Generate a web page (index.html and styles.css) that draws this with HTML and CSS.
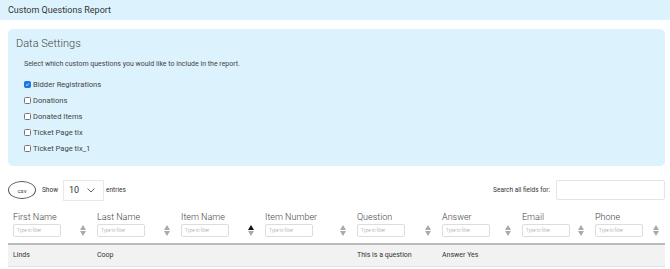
FILE: index.html
```html
<!DOCTYPE html>
<html>
<head>
<meta charset="utf-8">
<link rel="stylesheet" href="styles.css">
</head>
<body>
<div class="topbar">Custom Questions Report</div>
<div class="panel">
  <div class="panel-title">Data Settings</div>
  <div class="panel-desc">Select which custom questions you would like to include in the report.</div>
  <label class="opt"><span class="cb checked"><svg viewBox="0 0 8 8" width="7" height="7"><path d="M1.6 4.2 L3.3 5.8 L6.4 2.2" fill="none" stroke="#fff" stroke-width="1.3"/></svg></span>Bidder Registrations</label>
  <label class="opt"><span class="cb"></span>Donations</label>
  <label class="opt"><span class="cb"></span>Donated Items</label>
  <label class="opt"><span class="cb"></span>Ticket Page tix</label>
  <label class="opt"><span class="cb"></span>Ticket Page tix_1</label>
</div>
<div class="controls">
  <div class="left">
    <span class="csv">csv</span>
    <span class="lbl">Show</span>
    <span class="select">10 <svg width="8" height="5" viewBox="0 0 8 5"><path d="M0.5 0.5 L4 4 L7.5 0.5" fill="none" stroke="#555" stroke-width="0.9"/></svg></span>
    <span class="lbl">entries</span>
  </div>
  <div class="right">
    <span class="lbl">Search all fields for:</span>
    <span class="search"></span>
  </div>
</div>
<table class="grid">
  <colgroup>
    <col style="width:84px"><col style="width:84px"><col style="width:84px"><col style="width:92px">
    <col style="width:85px"><col style="width:80px"><col style="width:73px"><col style="width:75px">
  </colgroup>
  <thead>
    <tr>
      <th><div class="hname">First Name</div><div class="hrow"><span class="filter">Type to filter</span><span class="sort"><i class="up"></i><i class="dn"></i></span></div></th>
      <th><div class="hname">Last Name</div><div class="hrow"><span class="filter">Type to filter</span><span class="sort"><i class="up"></i><i class="dn"></i></span></div></th>
      <th><div class="hname">Item Name</div><div class="hrow"><span class="filter">Type to filter</span><span class="sort"><i class="up active"></i><i class="dn"></i></span></div></th>
      <th><div class="hname">Item Number</div><div class="hrow"><span class="filter">Type to filter</span><span class="sort"><i class="up"></i><i class="dn"></i></span></div></th>
      <th><div class="hname">Question</div><div class="hrow"><span class="filter">Type to filter</span><span class="sort"><i class="up"></i><i class="dn"></i></span></div></th>
      <th><div class="hname">Answer</div><div class="hrow"><span class="filter">Type to filter</span><span class="sort"><i class="up"></i><i class="dn"></i></span></div></th>
      <th><div class="hname">Email</div><div class="hrow"><span class="filter">Type to filter</span><span class="sort"><i class="up"></i><i class="dn"></i></span></div></th>
      <th><div class="hname">Phone</div><div class="hrow"><span class="filter">Type to filter</span><span class="sort"><i class="up"></i><i class="dn"></i></span></div></th>
    </tr>
  </thead>
  <tbody>
    <tr><td>Linds</td><td>Coop</td><td></td><td></td><td>This is a question</td><td>Answer Yes</td><td></td><td></td></tr>
  </tbody>
</table>
</body>
</html>
```
FILE: styles.css
```css
* { box-sizing: border-box; }
body {
  margin: 0;
  font-family: Roboto, "Liberation Sans", sans-serif;
  color: #333;
  background: #fff;
}
.topbar {
  height: 20px;
  background: #dcf3fe;
  font-size: 9px;
  line-height: 20px;
  padding-left: 8px;
  color: #333;
}
.panel {
  margin: 9px 5px 0 8px;
  background: #dcf3fe;
  border-radius: 5px;
  padding: 8px 8px 9px 8px;
  height: 137px;
}
.panel-title {
  font-size: 11px;
  font-weight: 300;
  color: #444;
  line-height: 14px;
  margin-bottom: 7px;
}
.panel-desc {
  font-size: 7px;
  color: #444;
  margin-left: 8px;
  line-height: 12px;
  margin-bottom: 6px;
}
.opt {
  display: flex;
  align-items: center;
  margin-left: 8px;
  height: 16px;
  font-size: 7.6px;
  color: #444;
}
.cb {
  width: 7px;
  height: 7px;
  border: 0.8px solid #767676;
  border-radius: 1.5px;
  background: #fff;
  margin-right: 2px;
  display: inline-flex;
  align-items: center;
  justify-content: center;
}
.cb.checked {
  background: #1a73e8;
  border-color: #1a73e8;
}
.controls {
  display: flex;
  justify-content: space-between;
  align-items: center;
  margin: 13px 5px 0 8px;
  height: 22px;
}
.left, .right { display: flex; align-items: center; }
.csv {
  width: 28px;
  height: 18px;
  border: 1px solid #555;
  border-radius: 50%;
  font-size: 6px;
  display: inline-flex;
  align-items: center;
  justify-content: center;
  color: #444;
  margin-right: 6px;
}
.lbl { font-size: 6.5px; color: #333; }
.select {
  width: 41px;
  height: 21px;
  border: 1px solid #e8e8e8;
  background: #fff;
  margin: 0 2px 0 5px;
  display: inline-flex;
  align-items: center;
  gap: 8px;
  padding-left: 5px;
  font-size: 9px;
  color: #333;
}
.search {
  width: 109px;
  height: 20px;
  border: 1px solid #e4e4e4;
  border-radius: 2px;
  background: #fff;
  margin-left: 6px;
}
.grid {
  margin: 8px 5px 0 8px;
  border-collapse: collapse;
  table-layout: fixed;
  width: 657px;
}
.grid th {
  text-align: left;
  font-weight: 300;
  padding: 2px 6px 6px 5px;
  border-bottom: 2px solid #bbb;
  vertical-align: top;
}
.hname {
  font-size: 9px;
  color: #444;
  line-height: 12px;
}
.hrow {
  display: flex;
  align-items: center;
  justify-content: space-between;
  margin-top: 1px;
}
.filter {
  width: 48px;
  height: 13px;
  border: 1px solid #ddd;
  border-radius: 2px;
  font-size: 4.5px;
  color: #999;
  line-height: 11px;
  padding-left: 3px;
  background: #fff;
  white-space: nowrap;
  overflow: hidden;
}
.sort {
  display: flex;
  flex-direction: column;
  align-items: center;
  gap: 1px;
}
.sort i {
  width: 0; height: 0;
  border-left: 3px solid transparent;
  border-right: 3px solid transparent;
}
.sort .up { border-bottom: 5px solid #aaa; }
.sort .dn { border-top: 5px solid #aaa; }
.sort .up.active { border-bottom-color: #111; }
.grid td {
  background: #f2f2f2;
  font-size: 7px;
  color: #333;
  height: 22px;
  padding: 0 5px 1px 5px;
  border-bottom: 1px solid #e4e4e4;
}
```
